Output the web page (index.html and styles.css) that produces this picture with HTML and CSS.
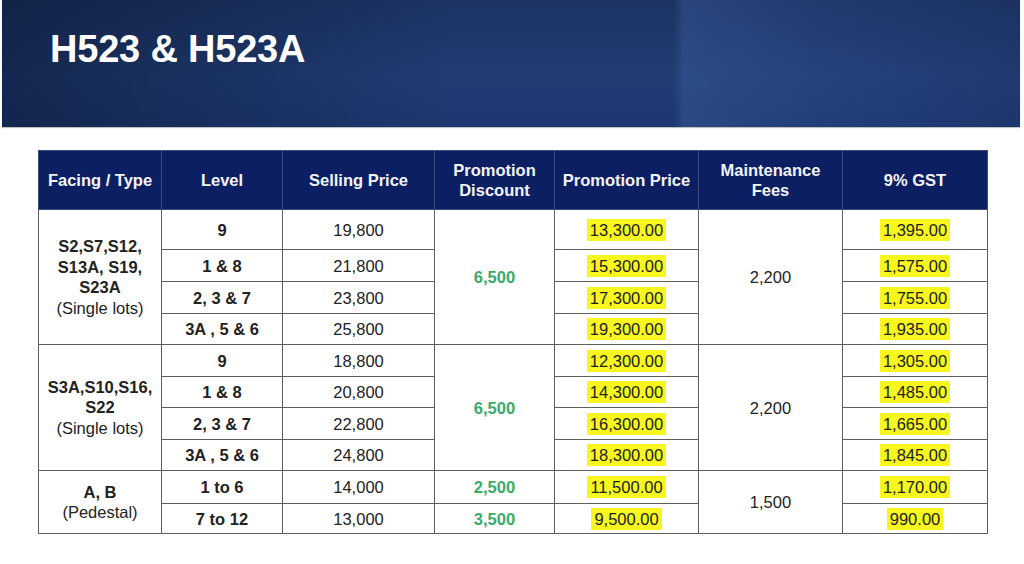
FILE: index.html
```html
<!DOCTYPE html>
<html>
<head>
<meta charset="utf-8">
<link rel="stylesheet" href="styles.css">
</head>
<body>
<div class="banner">
  <h1 class="title">H523 &amp; H523A</h1>
</div>
<table class="price">
  <colgroup>
    <col class="c1"><col class="c2"><col class="c3"><col class="c4"><col class="c5"><col class="c6"><col class="c7">
  </colgroup>
  <thead>
    <tr>
      <th>Facing / Type</th>
      <th>Level</th>
      <th>Selling Price</th>
      <th>Promotion<br>Discount</th>
      <th>Promotion Price</th>
      <th>Maintenance<br>Fees</th>
      <th>9% GST</th>
    </tr>
  </thead>
  <tbody>
    <tr class="r40">
      <td rowspan="4" class="type"><b>S2,S7,S12,<br>S13A, S19,<br>S23A</b><br>(Single lots)</td>
      <td class="lvl">9</td>
      <td>19,800</td>
      <td rowspan="4" class="disc">6,500</td>
      <td><span class="hl">13,300.00</span></td>
      <td rowspan="4">2,200</td>
      <td><span class="hl">1,395.00</span></td>
    </tr>
    <tr class="r32">
      <td class="lvl">1 &amp; 8</td>
      <td>21,800</td>
      <td><span class="hl">15,300.00</span></td>
      <td><span class="hl">1,575.00</span></td>
    </tr>
    <tr class="r32">
      <td class="lvl">2, 3 &amp; 7</td>
      <td>23,800</td>
      <td><span class="hl">17,300.00</span></td>
      <td><span class="hl">1,755.00</span></td>
    </tr>
    <tr class="r31">
      <td class="lvl">3A , 5 &amp; 6</td>
      <td>25,800</td>
      <td><span class="hl">19,300.00</span></td>
      <td><span class="hl">1,935.00</span></td>
    </tr>
    <tr class="r32">
      <td rowspan="4" class="type"><b>S3A,S10,S16,<br>S22</b><br>(Single lots)</td>
      <td class="lvl">9</td>
      <td>18,800</td>
      <td rowspan="4" class="disc">6,500</td>
      <td><span class="hl">12,300.00</span></td>
      <td rowspan="4">2,200</td>
      <td><span class="hl">1,305.00</span></td>
    </tr>
    <tr class="r31">
      <td class="lvl">1 &amp; 8</td>
      <td>20,800</td>
      <td><span class="hl">14,300.00</span></td>
      <td><span class="hl">1,485.00</span></td>
    </tr>
    <tr class="r32">
      <td class="lvl">2, 3 &amp; 7</td>
      <td>22,800</td>
      <td><span class="hl">16,300.00</span></td>
      <td><span class="hl">1,665.00</span></td>
    </tr>
    <tr class="r31">
      <td class="lvl">3A , 5 &amp; 6</td>
      <td>24,800</td>
      <td><span class="hl">18,300.00</span></td>
      <td><span class="hl">1,845.00</span></td>
    </tr>
    <tr class="r33">
      <td rowspan="2" class="type"><b>A, B</b><br>(Pedestal)</td>
      <td class="lvl">1 to 6</td>
      <td>14,000</td>
      <td class="disc">2,500</td>
      <td><span class="hl">11,500.00</span></td>
      <td rowspan="2">1,500</td>
      <td><span class="hl">1,170.00</span></td>
    </tr>
    <tr class="r30">
      <td class="lvl">7 to 12</td>
      <td>13,000</td>
      <td class="disc">3,500</td>
      <td><span class="hl">9,500.00</span></td>
      <td><span class="hl">990.00</span></td>
    </tr>
  </tbody>
</table>
</body>
</html>
```

FILE: styles.css
```css
html, body {
  margin: 0;
  padding: 0;
  background: #ffffff;
}
body {
  font-family: "Liberation Sans", Arial, sans-serif;
  color: #222;
  width: 1024px;
  height: 564px;
  overflow: hidden;
}
.banner {
  margin-left: 2px;
  width: 1018px;
  height: 127px;
  box-sizing: border-box;
  padding: 27px 0 0 48px;
  background:
    linear-gradient(90deg, rgba(10,22,50,0.55) 0%, rgba(10,22,50,0) 45%, rgba(0,0,0,0) 66%, rgba(70,110,180,0.3) 67%, rgba(60,100,170,0.15) 80%, rgba(20,35,80,0.1) 100%),
    linear-gradient(180deg, #1c3363 0%, #213d74 60%, #1d3870 100%);
  box-shadow: 0 1px 1px rgba(0,0,0,0.25);
}
.title {
  margin: 0;
  font-family: "Liberation Sans", Arial, sans-serif;
  font-weight: bold;
  font-size: 38px;
  line-height: 44px;
  color: #ffffff;
  letter-spacing: -0.2px;
}
.price {
  margin: 23px 0 0 38px;
  border-collapse: collapse;
  table-layout: fixed;
  width: 949px;
  font-size: 16.5px;
}
.c1 { width: 123px; }
.c2 { width: 121px; }
.c3 { width: 152px; }
.c4 { width: 120px; }
.c5 { width: 144px; }
.c6 { width: 144px; }
.c7 { width: 145px; }
.price th, .price td {
  border: 1px solid #5e5e5e;
  text-align: center;
  vertical-align: middle;
  padding: 0;
}
.price th {
  background: #0c1f63;
  color: #f2f3f8;
  font-weight: bold;
  height: 58px;
  line-height: 20px;
  font-size: 16.5px;
  border-color: #3a4a7a;
}
.price td {
  line-height: 20px;
  color: #222;
}
.r40 td { height: 39px; }
.r33 td { height: 32px; }
.r32 td { height: 31px; }
.r31 td { height: 30px; }
.r30 td { height: 29px; }
.price td.type {
  line-height: 20.5px;
}
.type b { font-weight: bold; }
.price td.lvl { font-weight: bold; }
.price td.disc {
  color: #3aab6c;
  font-weight: bold;
}
.hl {
  display: inline-block;
  background: #f7f61e;
  padding: 1px 3px;
  line-height: 20px;
}
```
